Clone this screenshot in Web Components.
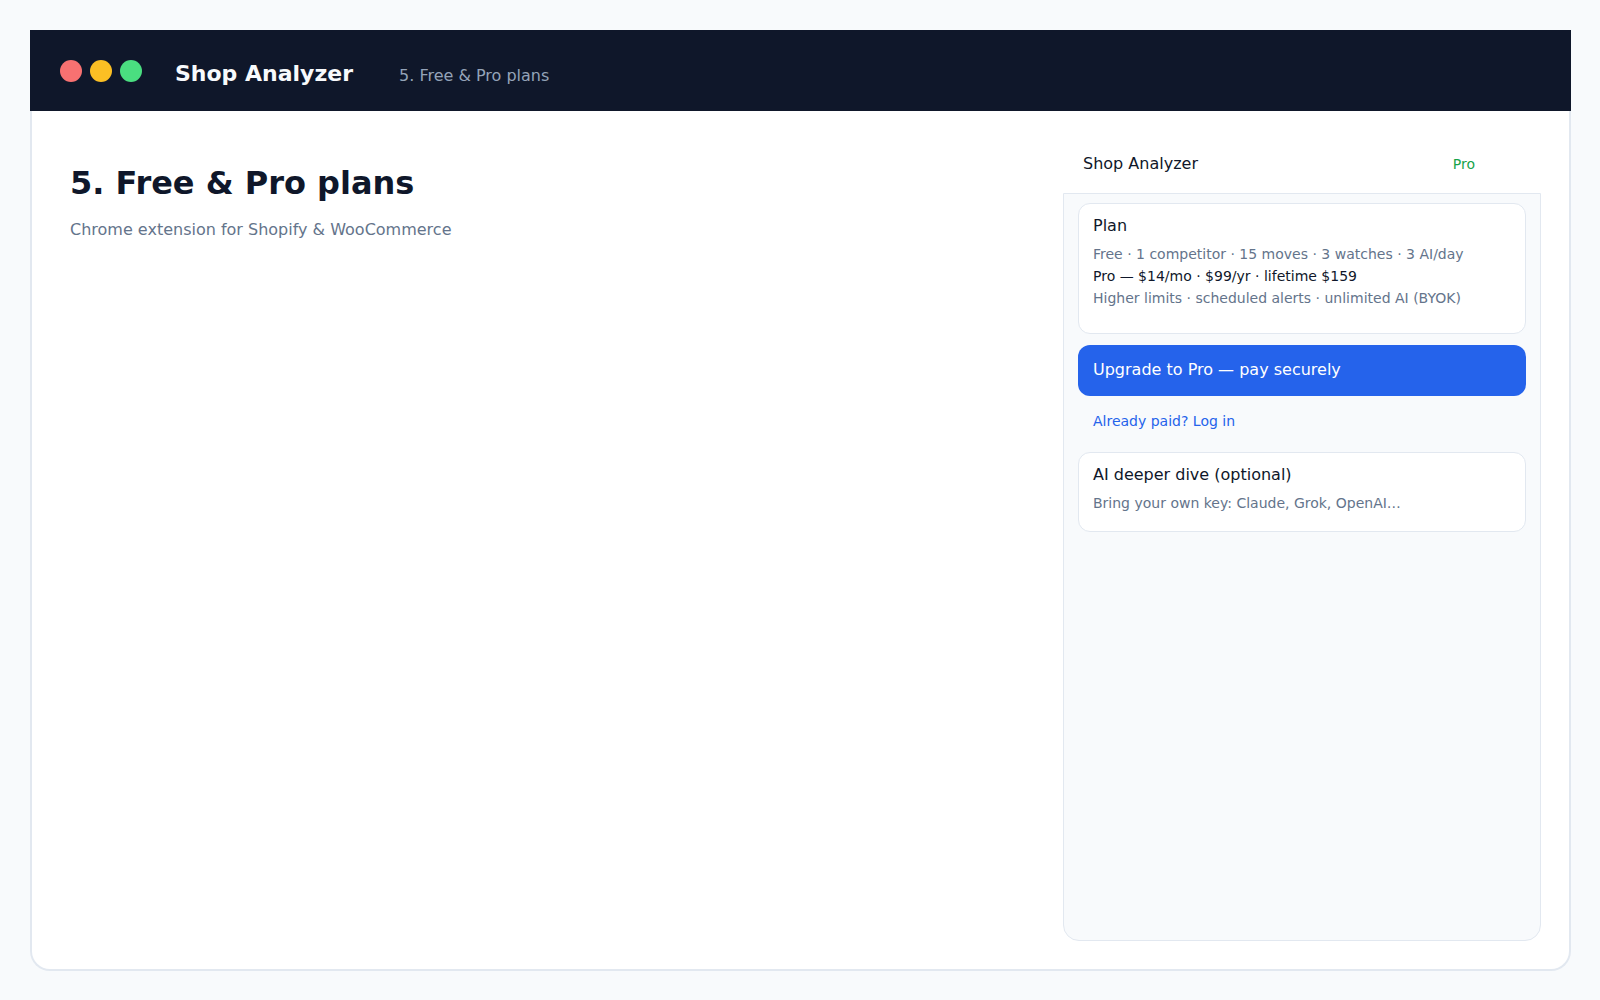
<!DOCTYPE html>
<html lang="en">
<head>
<meta charset="utf-8">
<title>Shop Analyzer</title>
<style>
  html, body { height: 100%; }
  body { margin: 0; background: #f8fafc; color: #0f172a; font: 16px/20px "DejaVu Sans", sans-serif; }
</style>
</head>
<body>
<app-window>
  <window-bar slot="bar" name="Shop Analyzer">5. Free &amp; Pro plans</window-bar>
  <page-intro heading="5. Free &amp; Pro plans">Chrome extension for Shopify &amp; WooCommerce</page-intro>
  <side-panel slot="panel" name="Shop Analyzer" badge="Pro">
    <info-card heading="Plan" class="roomy">
      <p>Free · 1 competitor · 15 moves · 3 watches · 3 AI/day</p>
      <p class="strong">Pro — $14/mo · $99/yr · lifetime $159</p>
      <p>Higher limits · scheduled alerts · unlimited AI (BYOK)</p>
    </info-card>
    <upgrade-actions></upgrade-actions>
    <info-card heading="AI deeper dive (optional)">
      <p>Bring your own key: Claude, Grok, OpenAI…</p>
    </info-card>
  </side-panel>
</app-window>
<script>
  const define = (name, render) => customElements.define(name, class extends HTMLElement {
    constructor() {
      super();
      this.attachShadow({ mode: "open" });
    }
    connectedCallback() {
      this.shadowRoot.innerHTML = render();
      for (const node of this.shadowRoot.querySelectorAll("[data-from]")) {
        node.textContent = this.getAttribute(node.dataset.from);
      }
    }
  });

  define("app-window", () => `
    <style>
      :host { display: flex; flex-direction: column; box-sizing: border-box; min-height: 100vh; padding: 30px 29px 29px 30px; }
      main { flex: 1; display: flex; justify-content: space-between; gap: 32px; padding: 32px 28px 28px 38px;
             background: #fff; border: 2px solid #e2e8f0; border-top: 0; border-radius: 0 0 20px 20px; }
    </style>
    <slot name="bar"></slot>
    <main><slot></slot><slot name="panel"></slot></main>`);

  define("window-bar", () => `
    <style>
      :host { display: block; background: #0f172a; }
      header { display: flex; align-items: center; min-height: 81px; padding: 0 30px; }
      .dots { display: flex; gap: 8px; }
      .dots i { width: 22px; height: 22px; border-radius: 50%; background: #f87171; }
      .dots i:nth-child(2) { background: #fbbf24; }
      .dots i:nth-child(3) { background: #4ade80; }
      .titles { display: flex; align-items: baseline; gap: 46px; margin-left: 33px; padding-top: 6px; }
      strong { font-size: 22px; line-height: 28px; color: #f8fafc; }
      span { color: #94a3b8; }
    </style>
    <header>
      <div class="dots" aria-hidden="true"><i></i><i></i><i></i></div>
      <div class="titles"><strong data-from="name"></strong><span><slot></slot></span></div>
    </header>`);

  define("page-intro", () => `
    <style>
      :host { display: block; padding-top: 20px; }
      h1 { margin: 0 0 17px; font-size: 32px; line-height: 40px; }
      p { margin: 0; color: #64748b; }
    </style>
    <h1 data-from="heading"></h1>
    <p><slot></slot></p>`);

  define("side-panel", () => `
    <style>
      :host { display: flex; flex-direction: column; flex: 0 1 478px; }
      header { display: flex; justify-content: space-between; align-items: center; padding: 11px 66px 19px 20px; }
      h2 { margin: 0; font-size: 16px; font-weight: 400; }
      .badge { font-size: 14px; color: #16a34a; }
      section { flex: 1; padding: 9px 14px; background: #f8fafc; border: 1px solid #e2e8f0; border-radius: 0 0 16px 16px; }
    </style>
    <header><h2 data-from="name"></h2><span class="badge" data-from="badge"></span></header>
    <section><slot></slot></section>`);

  define("info-card", () => `
    <style>
      :host { display: block; padding: 12px 14px 17px; background: #fff; border: 1px solid #e2e8f0; border-radius: 12px; }
      :host(.roomy) { padding-bottom: 24px; }
      h3 { margin: 0 0 7px; font-size: 16px; font-weight: 400; }
      ::slotted(p) { margin: 0; font-size: 14px; line-height: 22px; color: #64748b; }
      ::slotted(p.strong) { color: #0f172a; }
    </style>
    <h3 data-from="heading"></h3>
    <slot></slot>`);

  define("upgrade-actions", () => `
    <style>
      :host { display: flex; flex-direction: column; gap: 14px; padding: 11px 0 20px; }
      button { height: 51px; padding: 0 15px 2px; border: 0; border-radius: 12px; background: #2563eb; color: #fff;
               font: inherit; text-align: left; cursor: pointer; }
      a { align-self: flex-start; margin: 0 15px; font-size: 14px; line-height: 22px; color: #2563eb; text-decoration: none; }
    </style>
    <button type="button">Upgrade to Pro — pay securely</button>
    <a href="#login">Already paid? Log in</a>`);
</script>
</body>
</html>
